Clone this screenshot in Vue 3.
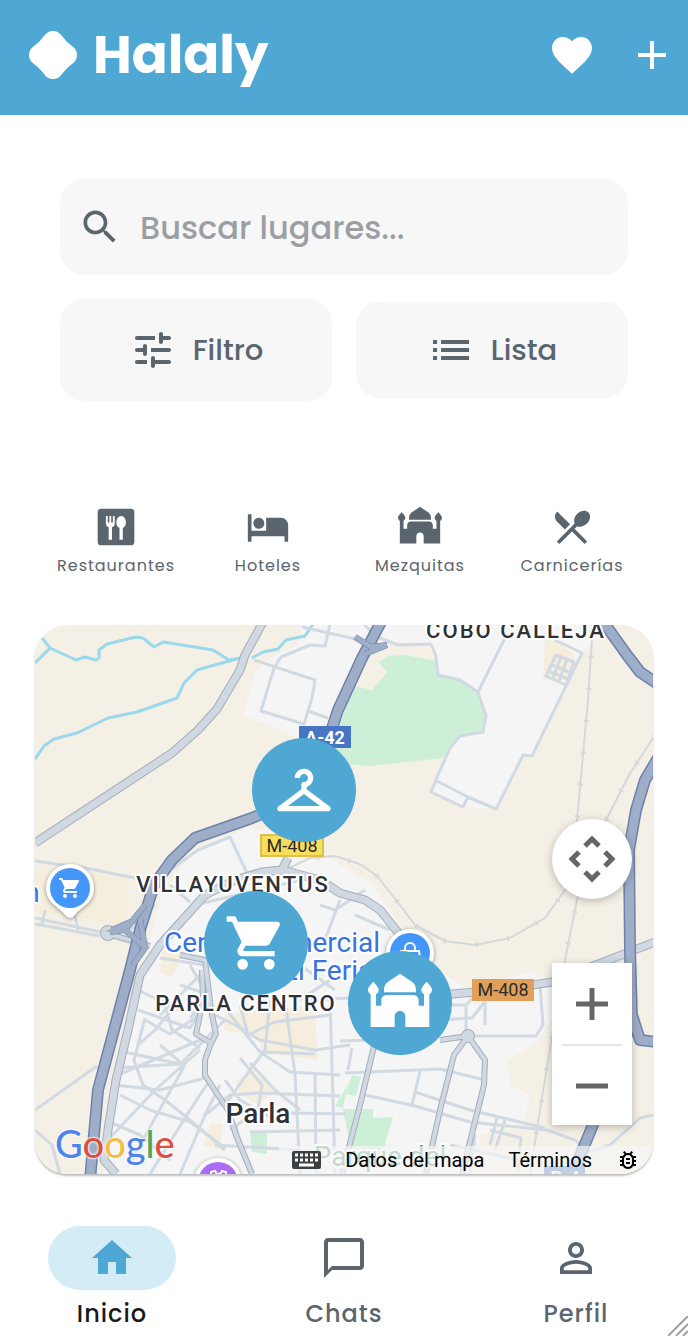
<template>
  <div class="screen">
    <header class="app-bar">
      <a href="#" class="brand">
        <svg class="brand-mark" viewBox="0 0 48 48" aria-hidden="true">
          <path d="M24 0C28 0 31 2 33 5C36 9 39 12 43 15C46 17 48 20 48 24C48 28 46 31 43 33C39 36 36 39 33 43C31 46 28 48 24 48C20 48 17 46 15 43C12 39 9 36 5 33C2 31 0 28 0 24C0 20 2 17 5 15C9 12 12 9 15 5C17 2 20 0 24 0z" />
        </svg>
        <span>Halaly</span>
      </a>
      <div class="app-actions">
        <button type="button" aria-label="Favoritos">
          <svg class="icon" viewBox="0 0 24 24"><path :d="icons.heart" /></svg>
        </button>
        <button type="button" aria-label="Añadir">
          <svg class="icon" viewBox="0 0 24 24"><path :d="icons.plus" /></svg>
        </button>
      </div>
    </header>

    <main class="content">
      <section class="finder">
        <label class="search-box">
          <svg viewBox="0 0 24 24" aria-hidden="true"><path :d="icons.search" /></svg>
          <input v-model="query" type="text" placeholder="Buscar lugares..." aria-label="Buscar lugares" />
        </label>
        <div class="finder-row">
          <button type="button" class="tile tile-tall">
            <svg class="icon" viewBox="0 0 24 24"><path :d="icons.tune" /></svg>
            <span>Filtro</span>
          </button>
          <button type="button" class="tile">
            <svg class="icon" viewBox="0 0 24 24"><path :d="icons.list" /></svg>
            <span>Lista</span>
          </button>
        </div>
      </section>

      <section class="categories">
        <button v-for="category in categories" :key="category.label" type="button" class="category">
          <svg viewBox="0 0 24 24" aria-hidden="true"><path :d="category.icon" fill-rule="evenodd" /></svg>
          <span>{{ category.label }}</span>
        </button>
      </section>

      <section class="map">
        <svg class="map-canvas" viewBox="35 625 618 549" preserveAspectRatio="xMidYMid slice" aria-label="Mapa de Parla">
          <rect class="land" x="35" y="625" width="618" height="549" />

          <!-- built-up areas and parks -->
          <path class="urban" d="M302 624L298 645 270 658 255 672 243 715 298 738 330 722 364 655 385 642 432 645 438 675 460 680 478 692 486 716 483 732 460 736 450 748 438 775 431 792 463 807 496 809 523 755 532 756 583 652 598 640 602 624z" />
          <path class="urban" d="M160 900L180 868 200 848 248 828 300 836 345 868 372 883 400 925 430 965 470 990 505 978 530 972 552 982 552 1018 538 1042 508 1060 510 1085 530 1095 524 1122 482 1135 472 1174 104 1174 107 1120 124 1045 142 972z" />
          <path class="commercial" d="M35 868L95 874 130 880 125 925 35 912zM163 948L184 952 172 978 160 972zM225 1015L315 1005 316 1030 318 1060 262 1052 258 1036 224 1030zM236 1080L255 1070 275 1092 258 1105 240 1094zM210 1124L223 1124 220 1150 203 1145zM545 640L560 642 575 655 566 680 543 680z" />
          <path class="park" d="M378 662L388 656 405 655 437 661 439 675 458 680 476 690 486 715 483 732 460 736 450 747 443 758 371 766 340 764 332 745 354 686 372 690 387 672z" />
          <path class="park" d="M250 1131L267 1133 267 1154 252 1152zM352 1075L361 1077 356 1096 346 1094zM343 1109L373 1109 373 1118 393 1117 386 1140 384 1155 350 1146zM348 1084L343 1108 335 1106z" />

          <!-- streams -->
          <g class="water">
            <path d="M42 638L50 648 76 660 85 657 96 660 99 658 99 650 107 644 136 637 143 638 154 647 163 642 213 650 229 660 240 658M35 663L50 648" />
            <path d="M240 658L197 670 184 683 177 698 137 712 108 718 77 733 54 739 44 746 35 759" />
            <path d="M252 658L263 652 278 649 286 640 305 636 313 624" />
          </g>

          <!-- minor streets -->
          <g class="street">
            <path d="M254 660L315 680 312 698 304 724 261 711 274 668 281 657 310 645 325 646 330 624M308 711L328 718M302 627L360 640" />
            <path d="M364 624L375 636 398 645 431 644 436 656 438 675 460 680 478 692 486 716 483 732 460 736 450 748 438 775 431 792 463 807 468 797 435 780M468 797L496 809 523 755 532 756 582 653 555 640M478 692L505 638" />
            <path d="M556 655L546 676 566 685 574 662zM552 665L571 673M548 671L568 679M561 657L553 678M567 659L559 681" />
            <path d="M35 861L85 868 135 878M35 918L100 932M35 924L100 936M45 910L42 924M75 915L78 930" />
            <path d="M150 900L170 870 198 850 230 837 247 873M170 885L190 902M215 875L230 890M195 905L300 880" />
            <path d="M138 990L175 1008 200 1014M138 1010L190 1028 198 1015M145 1020L170 1034 200 1015M124 1052L180 1064 225 1020M115 1068L180 1064M118 1075L165 1055 205 1038M115 1085L160 1090 205 1078" />
            <path d="M145 1018L134 1060 143 1085 165 1100 190 1120 225 1150M108 1140L155 1090 200 1050M132 1160L165 1100 185 1065M150 1174L190 1110 210 1080M180 1174L205 1115 220 1085" />
            <path d="M105 1120L140 1135 170 1160M120 1095L150 1110 190 1122 225 1148M138 1045L155 1030 180 1000M160 1045L180 1062M165 1005L172 1030 200 1048" />
            <path d="M215 1015L235 1025 260 1040 315 1050 350 1045M225 1008L260 1052 290 1072 340 1075M240 1005L248 1035 275 1022 330 1015M270 1000L265 1050 250 1070 225 1105M285 1000L295 1074 300 1174M330 1000L333 1100 335 1174" />
            <path d="M315 1074L316 1174M262 1052L315 1054M250 1063L275 1090 300 1110M225 1080L240 1100 275 1120M240 1058L262 1085 258 1110 230 1130M205 1115L230 1095 260 1093 340 1096M240 1112L345 1114M250 1132L340 1130M215 1145L300 1150M235 1124L250 1174" />
            <path d="M225 960L260 985 300 965 335 990M330 980L300 1000M310 1000L350 998M340 900L325 940M355 915L390 930M320 905L335 910 365 890" />
            <path d="M190 965L210 1000 190 1018M160 958L205 965M200 975L160 1015M180 985L210 995" />
            <path d="M430 1005L466 1005 466 1036M440 1020L472 1018 486 1000M485 995L485 1025M466 1005L480 990M540 985L543 1025 536 1036 475 1036" />
            <path d="M345 1073L440 1069 485 1080M365 1095L415 1106 470 1122 547 1130 575 1140 590 1152M420 1071L412 1105M415 1092L470 1110 545 1128M340 1041L375 1040M352 1048L348 1070" />
            <path d="M497 1118L490 1145M505 1120L495 1150M490 1130L521 1138 518 1174M450 1145L520 1160M590 1152L610 1145 640 1118 653 1115M475 1135L470 1174" />
            <path d="M35 1110L97 1066M35 1130L52 1145 60 1174M155 905L125 935" />
          </g>

          <!-- railway -->
          <g class="rail">
            <path d="M593 624L588 700 577 820 579 890 565 960 548 1060 530 1174" />
            <path d="M655 735L629 775 606 820 590 860 565 890 545 918 510 938 475 945 445 941 415 925 396 900 377 876 360 864 335 856 310 858 285 870" />
          </g>
          <g class="rail-ties">
            <path d="M593 624L588 700 577 820 579 890 565 960 548 1060 530 1174" />
            <path d="M655 735L629 775 606 820 590 860 565 890 545 918 510 938 475 945 445 941 415 925 396 900 377 876 360 864 335 856 310 858 285 870" />
          </g>

          <!-- main roads, drawn twice for the casing -->
          <g v-for="layer in ['casing', 'fill']" :key="'road-' + layer" :class="['road', layer]">
            <path d="M35 843L172 753 198 730 217 709 240 670 245 655 263 622" />
            <path d="M288 858L282 870 262 872 235 880 205 895 160 945 140 975 128 1030 116 1080 108 1130 104 1160 116 1174" />
            <path d="M282 870L320 880 340 893 365 900 380 910 400 935M440 995L500 990 552 982 655 942" />
          </g>
          <g v-for="layer in ['casing', 'fill']" :key="'lane-' + layer" :class="['road lane', layer]">
            <path d="M202 970L203 1000 196 1034 211 1043 205 1060 205 1075 212 1086 228 1110 236 1135 252 1174M180 955L205 960 211 1010 216 1034 211 1043" />
            <path d="M105 933L150 946M440 1040L468 1036 485 1060 484 1085 462 1174M468 1036L454 1055 440 1110 426 1174M375 1042L360 1105 342 1174" />
            <circle cx="108" cy="933" r="5" />
            <circle cx="468" cy="1036" r="4" />
          </g>
          <g v-for="layer in ['casing', 'fill']" :key="'highway-' + layer" :class="['highway', layer]">
            <path d="M382 620L362 658 338 710 320 765 295 800 252 818 195 838 172 860 154 885 140 930 130 970 98 1090 90 1180" />
            <path d="M602 620L627 655 640 672 658 684M658 758L645 780 636 810 629 850 630 950 632 1020 600 1108 570 1180M632 1015L640 1040 658 1042" />
          </g>
          <g v-for="layer in ['casing', 'fill']" :key="'ramp-' + layer" :class="['highway ramp', layer]">
            <path d="M355 637L371 647 387 645M365 654L387 645M145 905L125 930 110 932M125 930L146 948M112 930L135 920M133 965L145 948 140 918" />
          </g>

          <!-- road shields -->
          <rect class="shield-blue" x="299" y="726" width="52" height="22" />
          <text class="shield-text shield-light" x="325" y="744">A-42</text>
          <rect class="shield-yellow" x="261" y="835" width="62" height="21" />
          <text class="shield-text" x="292" y="852">M-408</text>
          <rect class="shield-orange" x="472" y="979" width="62" height="22" />
          <text class="shield-text" x="503" y="996">M-408</text>
          <rect class="shield-blue" x="544" y="1166" width="41" height="22" />
          <text class="shield-text shield-light" x="565" y="1184">R-4</text>

          <!-- place names -->
          <text class="district" x="516" y="638">COBO CALLEJA</text>
          <text class="district" x="233" y="892">VILLAYUVENTUS</text>
          <text class="district" x="246" y="1011">PARLA CENTRO</text>
          <text class="town" x="258" y="1123">Parla</text>
          <text class="poi" x="272" y="952">Centro Comercial</text>
          <text class="poi" x="331" y="980">El Ferial</text>
          <text class="poi" x="32" y="902">n</text>
          <text class="green-name" x="380" y="1166">Parque del</text>

          <!-- Google's own pins -->
          <g class="pin">
            <path class="pin-body" d="M70 864a24 24 0 0 1 24 24c0 16-14 19-19 27q-5 6-10 0c-5-8-19-11-19-27a24 24 0 0 1 24-24z" />
            <circle class="pin-blue" cx="70" cy="888" r="20" />
            <g class="pin-glyph" transform="translate(58 876)"><path :d="icons.cart" /></g>
            <circle class="pin-body" cx="410" cy="953" r="24" />
            <circle class="pin-blue" cx="410" cy="953" r="20" />
            <path class="pin-line" d="M401 951h18l2 14h-22zM405 951v-3a5 5 0 0 1 10 0v3" />
            <circle class="pin-body" cx="218" cy="1182" r="24" />
            <circle class="pin-purple" cx="218" cy="1182" r="20" />
            <path class="pin-line" d="M211 1176v-4l4-1 2 3h3l2-3 4 1v4" />
          </g>
        </svg>

        <button
          v-for="marker in markers"
          :key="marker.name"
          type="button"
          class="marker"
          :aria-label="marker.name"
          :style="{ left: marker.x + '%', top: marker.y + '%' }"
        >
          <svg viewBox="0 0 24 24"><path :d="marker.icon" /></svg>
        </button>

        <div class="map-controls">
          <button type="button" class="pan-button" aria-label="Controles de la cámara">
            <svg viewBox="0 0 48 48"><path d="M17 11l7-7 7 7M17 37l7 7 7-7M11 17l-7 7 7 7M37 17l7 7-7 7" /></svg>
          </button>
          <div class="zoom-buttons">
            <button type="button" aria-label="Acercar">
              <svg viewBox="0 0 32 32"><path d="M16 0v32M0 16h32" /></svg>
            </button>
            <button type="button" aria-label="Alejar">
              <svg viewBox="0 0 32 32"><path d="M0 16h32" /></svg>
            </button>
          </div>
        </div>

        <a href="#" class="google">
          <span class="g-blue">G</span><span class="g-red">o</span><span class="g-yellow">o</span><span class="g-blue">g</span><span class="g-green">l</span><span class="g-red">e</span>
        </a>

        <div class="map-legal">
          <button type="button" aria-label="Combinaciones de teclas">
            <svg class="keyboard" viewBox="0 0 29 18">
              <rect width="29" height="18" rx="2" />
              <path d="M3 4h3M8 4h3M13 4h3M18 4h3M23 4h3M3 9h3M8 9h3M13 9h3M18 9h3M23 9h3M7 14h15" />
            </svg>
          </button>
          <button type="button">Datos del mapa</button>
          <a href="#">Términos</a>
          <a href="#" aria-label="Informar de un error">
            <svg class="bug" viewBox="0 0 24 24"><path :d="icons.bug" /></svg>
          </a>
        </div>
      </section>
    </main>

    <nav class="tab-bar">
      <a
        v-for="tab in tabs"
        :key="tab.label"
        href="#"
        class="tab"
        :class="{ active: tab.label === activeTab }"
        @click.prevent="activeTab = tab.label"
      >
        <span class="tab-pill">
          <svg class="icon" viewBox="0 0 24 24"><path :d="tab.icon" /></svg>
        </span>
        <span>{{ tab.label }}</span>
      </a>
      <svg class="grip" viewBox="0 0 20 20" aria-hidden="true"><path d="M0 20L20 0M8 20L20 8M15 20l5-5" /></svg>
    </nav>
  </div>
</template>

<script setup>
import { ref } from 'vue';

const icons = {
  heart: 'M12 21.35l-1.45-1.32C5.4 15.36 2 12.28 2 8.5 2 5.42 4.42 3 7.5 3c1.74 0 3.41.81 4.5 2.09C13.09 3.81 14.76 3 16.5 3 19.58 3 22 5.42 22 8.5c0 3.78-3.4 6.86-8.55 11.54L12 21.35z',
  plus: 'M19 13h-6v6h-2v-6H5v-2h6V5h2v6h6v2z',
  search: 'M15.5 14h-.79l-.28-.27C15.41 12.59 16 11.11 16 9.5 16 5.91 13.09 3 9.5 3S3 5.91 3 9.5 5.91 16 9.5 16c1.61 0 3.09-.59 4.23-1.57l.27.28v.79l5 4.99L20.49 19l-4.99-5zm-6 0C7.01 14 5 11.99 5 9.5S7.01 5 9.5 5 14 7.01 14 9.5 11.99 14 9.5 14z',
  tune: 'M3 18c0 .55.45 1 1 1h5v-2H4c-.55 0-1 .45-1 1zM3 6c0 .55.45 1 1 1h9V5H4c-.55 0-1 .45-1 1zm10 14v-1h7c.55 0 1-.45 1-1s-.45-1-1-1h-7v-1c0-.55-.45-1-1-1s-1 .45-1 1v4c0 .55.45 1 1 1s1-.45 1-1zM7 10v1H4c-.55 0-1 .45-1 1s.45 1 1 1h3v1c0 .55.45 1 1 1s1-.45 1-1v-4c0-.55-.45-1-1-1s-1 .45-1 1zm14 2c0-.55-.45-1-1-1h-9v2h9c.55 0 1-.45 1-1zm-5-3c.55 0 1-.45 1-1V7h3c.55 0 1-.45 1-1s-.45-1-1-1h-3V4c0-.55-.45-1-1-1s-1 .45-1 1v4c0 .55.45 1 1 1z',
  list: 'M3 13h2v-2H3v2zm0 4h2v-2H3v2zm0-8h2V7H3v2zm4 4h14v-2H7v2zm0 4h14v-2H7v2zM7 7v2h14V7H7z',
  restaurant: 'M4 2h16a2 2 0 0 1 2 2v16a2 2 0 0 1-2 2H4a2 2 0 0 1-2-2V4a2 2 0 0 1 2-2zM6.5 6v4c0 1.2.7 2 1.5 2.2V19h1.8v-6.8c.9-.2 1.5-1 1.5-2.2V6h-1v3.5h-.9V6h-1v3.5h-.9V6zM14.8 6c-1.5 0-2.6 1.6-2.6 3.5 0 1.5.7 2.6 1.7 2.9V19h1.8v-6.6c1-.3 1.7-1.4 1.7-2.9 0-1.9-1.1-3.5-2.6-3.5z',
  hotel: 'M7 13c1.66 0 3-1.34 3-3S8.66 7 7 7s-3 1.34-3 3 1.34 3 3 3zm12-6h-8v7H3V5H1v15h2v-3h18v3h2v-9c0-2.21-1.79-4-4-4z',
  mosque: 'M7 8h10c.29 0 .57.06.84.13.1-.31.16-.65.16-1.13 0-1.13-.5-2.2-1.4-2.9L12 1 7.4 4.1C6.5 4.8 6 5.87 6 7c0 .48.06.82.16 1.13.27-.07.55-.13.84-.13zM24 7c0-1.1-2-3-2-3s-2 1.9-2 3c0 .74.4 1.38 1 1.72V13h-2v-2c0-1.1-.9-2-2-2H7c-1.1 0-2 .9-2 2v2H3V8.72c.6-.34 1-.98 1-1.72 0-1.1-2-3-2-3S0 5.9 0 7c0 .74.4 1.38 1 1.72V21h9v-4c0-1.1.9-2 2-2s2 .9 2 2v4h9V8.72c.6-.35 1-.98 1-1.72z',
  cutlery: 'M8.1 13.34l2.83-2.83L3.91 3.5c-1.56 1.56-1.56 4.09 0 5.66l4.19 4.18zm6.78-1.81c1.53.71 3.68.21 5.27-1.38 1.91-1.91 2.28-4.65.81-6.12-1.46-1.46-4.2-1.1-6.12.81-1.59 1.59-2.09 3.74-1.38 5.27L3.7 19.87l1.41 1.41L12 14.41l6.88 6.88 1.41-1.41L13.41 13l1.47-1.47z',
  hanger: 'M21.6 18.2L13 11.75v-.91c1.65-.49 2.8-2.17 2.43-4.05-.26-1.31-1.3-2.4-2.61-2.7C10.54 3.57 8.5 5.3 8.5 7.5h2c0-.83.67-1.5 1.5-1.5s1.5.67 1.5 1.5c0 .84-.69 1.52-1.53 1.5-.54-.01-.97.45-.97.99v1.76L2.4 18.2c-.77.58-.36 1.8.6 1.8h18c.96 0 1.37-1.22.6-1.8zM6 18l6-4.5 6 4.5H6z',
  cart: 'M7 18c-1.1 0-1.99.9-1.99 2S5.9 22 7 22s2-.9 2-2-.9-2-2-2zM1 2v2h2l3.6 7.59-1.35 2.45c-.16.28-.25.61-.25.96 0 1.1.9 2 2 2h12v-2H7.42c-.14 0-.25-.11-.25-.25l.03-.12.9-1.63h7.45c.75 0 1.41-.41 1.75-1.03l3.58-6.49c.08-.14.12-.31.12-.48 0-.55-.45-1-1-1H5.21l-.94-2H1zm16 16c-1.1 0-1.99.9-1.99 2s.89 2 1.99 2 2-.9 2-2-.9-2-2-2z',
  bug: 'M20 8h-2.81c-.45-.78-1.07-1.45-1.82-1.96L17 4.41 15.59 3l-2.17 2.17C12.96 5.06 12.49 5 12 5s-.96.06-1.41.17L8.41 3 7 4.41l1.62 1.63C7.88 6.55 7.26 7.22 6.81 8H4v2h2.09c-.05.33-.09.66-.09 1v1H4v2h2v1c0 .34.04.67.09 1H4v2h2.81c1.04 1.79 2.97 3 5.19 3s4.15-1.21 5.19-3H20v-2h-2.09c.05-.33.09-.66.09-1v-1h2v-2h-2v-1c0-.34-.04-.67-.09-1H20V8zm-4 4v3c0 2.2-1.8 4-4 4s-4-1.8-4-4v-4c0-2.2 1.8-4 4-4s4 1.8 4 4v1zm-6 2h4v2h-4v-2zm0-4h4v2h-4v-2z',
  home: 'M10 20v-6h4v6h5v-8h3L12 3 2 12h3v8z',
  chat: 'M20 2H4c-1.1 0-2 .9-2 2v18l4-4h14c1.1 0 2-.9 2-2V4c0-1.1-.9-2-2-2zm0 14H6l-2 2V4h16v12z',
  person: 'M12 5.9c1.16 0 2.1.94 2.1 2.1s-.94 2.1-2.1 2.1S9.9 9.16 9.9 8s.94-2.1 2.1-2.1m0 9c2.97 0 6.1 1.46 6.1 2.1v1.1H5.9V17c0-.64 3.13-2.1 6.1-2.1M12 4C9.79 4 8 5.79 8 8s1.79 4 4 4 4-1.79 4-4-1.79-4-4-4zm0 9c-2.67 0-8 1.34-8 4v3h16v-3c0-2.66-5.33-4-8-4z',
};

const query = ref('');
const activeTab = ref('Inicio');

const categories = [
  { label: 'Restaurantes', icon: icons.restaurant },
  { label: 'Hoteles', icon: icons.hotel },
  { label: 'Mezquitas', icon: icons.mosque },
  { label: 'Carnicerías', icon: icons.cutlery },
];

// Marker positions are percentages of the map's size
const markers = [
  { name: 'Tienda de ropa', icon: icons.hanger, x: 43.5, y: 30 },
  { name: 'Supermercado', icon: icons.cart, x: 35.8, y: 58 },
  { name: 'Mezquita', icon: icons.mosque, x: 59, y: 68.8 },
];

const tabs = [
  { label: 'Inicio', icon: icons.home },
  { label: 'Chats', icon: icons.chat },
  { label: 'Perfil', icon: icons.person },
];
</script>

<style>
body {
  margin: 0;
  background: #fff;
}
</style>

<style scoped>
.screen {
  display: flex;
  flex-direction: column;
  min-height: 100vh;
  font-family: Poppins, Inter, sans-serif;
  color: #5a656e;
}

button {
  padding: 0;
  border: none;
  background: none;
  font: inherit;
  color: inherit;
  cursor: pointer;
}

a {
  color: inherit;
  text-decoration: none;
}

svg {
  display: block;
  fill: currentColor;
}

.icon {
  width: 48px;
  height: 48px;
}

/* Header */
.app-bar {
  display: flex;
  align-items: center;
  justify-content: space-between;
  height: 115px;
  padding: 0 12px 6px 29px;
  box-sizing: border-box;
  background: #4ea8d3;
  color: #fff;
}

.brand {
  display: flex;
  align-items: center;
  gap: 16px;
  font-size: 53px;
  line-height: 64px;
  font-weight: 700;
}

.brand-mark {
  width: 48px;
  height: 48px;
}

.app-actions {
  display: flex;
  gap: 32px;
}

/* Search and filters */
.finder {
  display: flex;
  flex-direction: column;
  gap: 24px;
  padding: 64px 60px 0;
}

.search-box {
  display: flex;
  align-items: center;
  gap: 18px;
  height: 96px;
  padding: 0 18px;
  box-sizing: border-box;
  border-radius: 24px;
  background: #f7f7f7;
}

.search-box svg {
  flex: none;
  width: 44px;
  height: 44px;
}

.search-box input {
  flex: 1;
  min-width: 0;
  padding: 2px 0 0;
  border: none;
  outline: none;
  background: none;
  font: inherit;
  font-size: 32px;
  font-weight: 500;
  color: #5a656e;
}

.search-box input::placeholder {
  color: #9b9fa4;
  opacity: 1;
}

.finder-row {
  display: grid;
  grid-template-columns: 1fr 1fr;
  align-items: center;
  gap: 24px;
}

.tile {
  display: flex;
  align-items: center;
  justify-content: center;
  gap: 16px;
  height: 96px;
  border-radius: 24px;
  background: #f7f7f7;
  font-size: 29px;
  font-weight: 500;
}

.tile-tall {
  height: 102px;
}

/* Categories */
.categories {
  display: grid;
  grid-template-columns: repeat(4, 1fr);
  padding: 104px 40px 0;
}

.category {
  display: flex;
  flex-direction: column;
  align-items: center;
  gap: 7px;
  font-size: 16px;
  line-height: 20px;
  letter-spacing: 1px;
}

.category svg {
  width: 44px;
  height: 44px;
}

/* Map */
.map {
  position: relative;
  margin: 49px 35px 0;
  aspect-ratio: 618 / 549;
  border-radius: 32px;
  overflow: hidden;
  box-shadow: 0 2px 2px rgba(0, 0, 0, 0.25);
  font-family: Roboto, sans-serif;
}

.map-canvas {
  width: 100%;
  height: 100%;
}

.land {
  fill: #f5f0e5;
}

.urban {
  fill: #f5f5f5;
}

.commercial {
  fill: #f6eedd;
}

.park {
  fill: #cdefd8;
}

.water,
.street,
.rail,
.rail-ties,
.road,
.highway {
  fill: none;
  stroke-linejoin: round;
}

.water {
  stroke: #9ad8ec;
  stroke-width: 3;
}

.street {
  stroke: #d1dae3;
  stroke-width: 3;
}

.rail {
  stroke: #d6d7da;
  stroke-width: 2;
}

.rail-ties {
  stroke: #d6d7da;
  stroke-width: 5;
  stroke-dasharray: 2 30;
}

.road.casing {
  stroke: #a4adbb;
  stroke-width: 9;
}

.road.fill {
  stroke: #d0d8e1;
  stroke-width: 7;
}

.road.lane.casing {
  stroke-width: 6;
}

.road.lane.fill {
  stroke-width: 4;
}

.highway.casing {
  stroke: #6d82ab;
  stroke-width: 12;
}

.highway.fill {
  stroke: #9eadc8;
  stroke-width: 9;
}

.highway.ramp.casing {
  stroke-width: 6;
}

.highway.ramp.fill {
  stroke-width: 5;
}

.map-canvas text {
  text-anchor: middle;
  paint-order: stroke;
  stroke: #fff;
  stroke-width: 4;
  stroke-linejoin: round;
}

.map-canvas .shield-text {
  font-size: 18px;
  fill: #2b2b2b;
  stroke: none;
}

.map-canvas .shield-light {
  font-weight: 700;
  fill: #fff;
}

.shield-blue {
  fill: #4775c3;
}

.shield-yellow {
  fill: #f9dd5c;
  stroke: #d9c24b;
  stroke-width: 2;
}

.shield-orange {
  fill: #e0a05a;
}

.district {
  font-size: 22px;
  font-weight: 500;
  letter-spacing: 2px;
  fill: #2f3136;
}

.town {
  font-size: 28px;
  font-weight: 500;
  fill: #2f3136;
}

.poi {
  font-size: 28px;
  fill: #3871e0;
}

.green-name {
  font-size: 28px;
  fill: #4c9a78;
}

.pin-body {
  fill: #fff;
  filter: drop-shadow(0 1px 2px rgba(0, 0, 0, 0.4));
}

.pin-blue {
  fill: #4496f8;
}

.pin-purple {
  fill: #ab6cf6;
}

.pin-glyph {
  fill: #fff;
}

.pin-line {
  fill: none;
  stroke: #fff;
  stroke-width: 2;
}

.marker {
  position: absolute;
  display: grid;
  place-items: center;
  width: 104px;
  height: 104px;
  border-radius: 50%;
  background: #4ea8d3;
  color: #fff;
  transform: translate(-50%, -50%);
}

.marker svg {
  width: 64px;
  height: 64px;
}

.map-controls {
  position: absolute;
  right: 21px;
  bottom: 49px;
  display: flex;
  flex-direction: column;
  gap: 64px;
  width: 80px;
}

.map-controls svg {
  fill: none;
  stroke: #666;
  stroke-width: 5;
}

.pan-button,
.zoom-buttons {
  background: #fff;
  box-shadow: 0 2px 8px rgba(0, 0, 0, 0.25);
}

.pan-button {
  display: grid;
  place-items: center;
  height: 80px;
  border-radius: 50%;
}

.pan-button svg {
  width: 48px;
  height: 48px;
}

.zoom-buttons {
  display: flex;
  flex-direction: column;
  padding: 0 10px;
}

.zoom-buttons button {
  display: grid;
  place-items: center;
  height: 81px;
}

.zoom-buttons button + button {
  border-top: 2px solid #e6e6e6;
}

.zoom-buttons svg {
  width: 32px;
  height: 32px;
}

.google {
  position: absolute;
  left: 20px;
  bottom: 7px;
  font-family: Lato, sans-serif;
  font-size: 38px;
  line-height: 48px;
  font-weight: 500;
  text-shadow: 0 0 2px #fff, 0 0 2px #fff, 0 0 3px #fff;
}

.g-blue {
  color: #4f83ee;
}

.g-red {
  color: #d95040;
}

.g-yellow {
  color: #f2bd42;
}

.g-green {
  color: #58a55c;
}

.map-legal {
  position: absolute;
  right: 0;
  bottom: 0;
  display: flex;
  align-items: center;
  gap: 24px;
  height: 28px;
  padding: 0 13px;
  background: rgba(245, 245, 245, 0.7);
  font-size: 20px;
  line-height: 28px;
  color: #000;
}

.keyboard {
  width: 29px;
  height: 18px;
  fill: #3c4043;
}

.keyboard path {
  stroke: #fff;
  stroke-width: 3;
}

.bug {
  width: 24px;
  height: 24px;
}

/* Bottom navigation */
.tab-bar {
  position: relative;
  display: flex;
  justify-content: space-between;
  height: 124px;
  margin-top: auto;
  padding: 13px 48px 0;
  box-sizing: border-box;
  border-top: 1px solid #fdfdfd;
}

.tab {
  display: flex;
  flex-direction: column;
  align-items: center;
  gap: 8px;
  width: 128px;
  font-size: 24px;
  line-height: 32px;
  font-weight: 500;
  letter-spacing: 1px;
}

.tab.active {
  color: #171a1d;
}

.tab-pill {
  display: grid;
  place-items: center;
  width: 128px;
  height: 64px;
  border-radius: 32px;
}

.active .tab-pill {
  background: #d3ecf6;
  color: #4ea8d3;
}

.grip {
  position: absolute;
  right: 0;
  bottom: 0;
  width: 20px;
  height: 20px;
  stroke: #a0a0a0;
  stroke-width: 2;
}
</style>
